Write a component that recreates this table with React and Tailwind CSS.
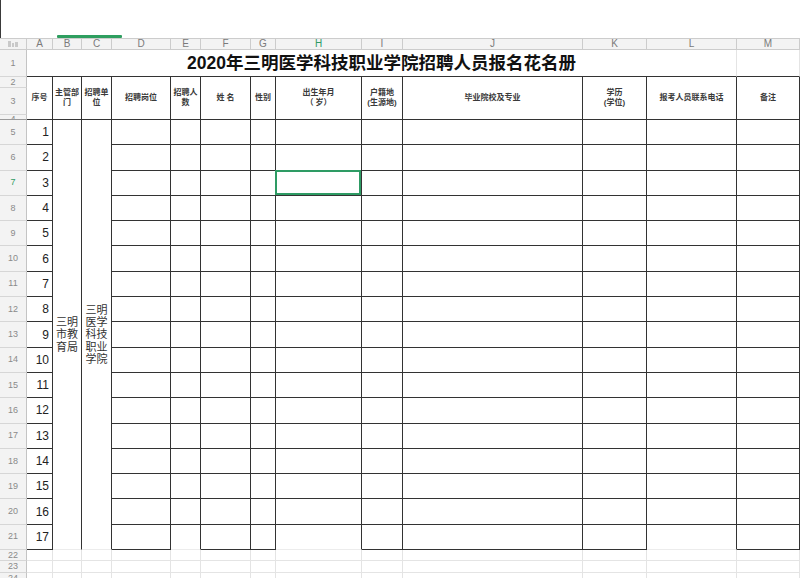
import React from 'react';

const cols = ['A','B','C','D','E','F','G','H','I','J','K','L','M'];

const headers = [
  ['序号'],
  ['主管部', '门'],
  ['招聘单', '位'],
  ['招聘岗位'],
  ['招聘人', '数'],
  ['姓 名'],
  ['性别'],
  ['出生年月', '（ 岁）'],
  ['户籍地', '(生源地)'],
  ['毕业院校及专业'],
  ['学历', '(学位)'],
  ['报考人员联系电话'],
  ['备注'],
];

const rowHdr = 'bg-[#f3f3f3] border-r border-b border-r-[#c4c4c4] border-b-[#d6d6d6] text-[9px] text-[#8a8a8a] flex items-center justify-center overflow-hidden leading-none';
const rowHdrGreen = 'bg-[#f3f3f3] border-r border-b border-r-[#c4c4c4] border-b-[#d6d6d6] text-[9px] text-[#2e9b64] flex items-center justify-center overflow-hidden leading-none';
const light = 'border-r border-b border-[#e4e4e4]';
const dark = 'border-r border-b border-[#333333]';
const darkNoBottom = 'border-r border-b border-r-[#333333] border-b-[#ececec]';

function CornerIcon() {
  return (
    <svg width="12" height="8" viewBox="0 0 12 8">
      <rect x="1" y="1" width="3" height="6" fill="#c9c9c9" />
      <rect x="5" y="3" width="2" height="4" fill="#c9c9c9" />
      <rect x="8" y="2" width="3" height="5" fill="#c9c9c9" />
    </svg>
  );
}

export default function App() {
  const dataRows = [];
  for (let r = 5; r <= 21; r++) {
    const n = r - 4;
    const cells = [];
    cells.push(
      <div key={`h${r}`} className={r === 7 ? rowHdrGreen : rowHdr}>{r}</div>
    );
    cells.push(
      <div key={`a${r}`} className={`${dark} flex items-center justify-end pr-[3px] text-[12px] text-[#222]`}>{n}</div>
    );
    if (r === 5) {
      cells.push(
        <div key="b5" className="row-span-17 border-r border-b border-r-[#333333] border-b-[#ececec] flex items-center justify-center text-center text-[11px] leading-[12.5px] text-[#333]">
          <div>三明<br />市教<br />育局</div>
        </div>
      );
      cells.push(
        <div key="c5" className="row-span-17 border-r border-b border-r-[#333333] border-b-[#ececec] flex items-center justify-center text-center text-[11px] leading-[12.2px] text-[#333]">
          <div>三明<br />医学<br />科技<br />职业<br />学院</div>
        </div>
      );
    }
    ['D','E','F','G','H','I','J','K','L','M'].forEach((c) => {
      const noBottom = r === 21 && (c === 'E' || c === 'H' || c === 'L');
      const cls = noBottom ? darkNoBottom : dark;
      if (c === 'H' && r === 7) {
        cells.push(
          <div key={`${c}${r}`} className={`${cls} relative`}>
            <div className="absolute -top-px -left-px right-0 bottom-0 border-2 border-[#2e9b64]" />
          </div>
        );
      } else {
        cells.push(<div key={`${c}${r}`} className={cls} />);
      }
    });
    dataRows.push(...cells);
  }

  const tailRows = [];
  [22, 23, 24].forEach((r) => {
    tailRows.push(<div key={`h${r}`} className={rowHdr}>{r}</div>);
    cols.forEach((c) => tailRows.push(<div key={`${c}${r}`} className={light} />));
  });

  return (
    <div className="w-[800px] h-[578px] overflow-hidden bg-white font-['Liberation_Sans','Noto_Sans_CJK_SC',sans-serif]">
      <div className="h-[38px] border-l border-[#3a3a3a] flex items-end pl-[56px]">
        <div className="w-[65px] h-[3px] bg-[#2e9e5f] rounded-[1px]" />
      </div>
      <div className="grid grid-cols-[27px_26px_29px_30px_59px_30px_50px_25px_86px_41px_180px_64px_90px_63px] grid-rows-[12px_27px_11px_27px_5px_repeat(17,25.3px)_11px_12px_12px]">
        <div className="bg-[#f3f3f3] border-t border-r border-b border-[#cccccc] flex items-center justify-center">
          <CornerIcon />
        </div>
        {cols.map((c) => (
          <div
            key={`col${c}`}
            className={
              c === 'H'
                ? 'bg-[#f3f3f3] border-t border-r border-b border-[#cccccc] text-[10px] leading-none text-[#2e9b64] flex items-center justify-center'
                : 'bg-[#f3f3f3] border-t border-r border-b border-[#cccccc] text-[10px] leading-none text-[#7a7a7a] flex items-center justify-center'
            }
          >
            {c}
          </div>
        ))}

        <div className={rowHdr}>1</div>
        <div className="col-span-12 border-r border-b border-r-[#e4e4e4] border-b-[#333333] flex items-center justify-center text-[17.5px] font-bold text-[#111]">
          2020年三明医学科技职业学院招聘人员报名花名册
        </div>
        <div className="border-r border-b border-r-[#e4e4e4] border-b-[#333333]" />

        <div className={rowHdr}>2</div>
        {headers.map((lines, i) => (
          <div
            key={`hd${i}`}
            className="row-span-3 border-r border-b border-[#333333] flex items-center justify-center text-center text-[8px] leading-[10px] font-bold text-[#3a3a3a]"
          >
            <div>
              {lines.map((l, j) => (
                <div key={j} className="whitespace-pre">{l}</div>
              ))}
            </div>
          </div>
        ))}
        <div className={rowHdr}>3</div>
        <div className="bg-[#f3f3f3] border-r border-b border-r-[#c4c4c4] border-b-[#9a9a9a] text-[9px] text-[#8a8a8a] flex items-start justify-center overflow-hidden leading-[8px]">4</div>

        {dataRows}
        {tailRows}
      </div>
    </div>
  );
}
